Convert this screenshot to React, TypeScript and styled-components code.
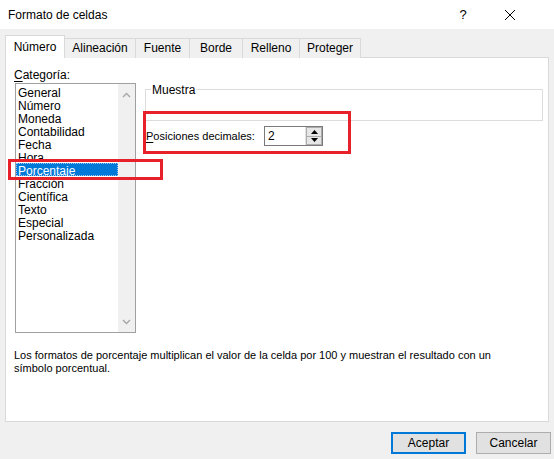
import React from "react";
import styled, { createGlobalStyle } from "styled-components";

const GlobalStyle = createGlobalStyle`
  html, body {
    margin: 0;
    padding: 0;
    background: #f0f0f0;
  }
  body {
    font-family: "Liberation Sans", Arial, sans-serif;
    font-size: 11px;
    color: #000;
  }
`;

const Dialog = styled.div`
  width: 554px;
  height: 459px;
  background: #f0f0f0;
  display: flex;
  flex-direction: column;
  overflow: hidden;
`;

const TitleBar = styled.div`
  height: 29px;
  background: #fff;
  display: flex;
  align-items: center;
  padding-left: 8px;
  box-sizing: border-box;
`;

const Title = styled.div`
  flex: 1;
  font-size: 12px;
  line-height: 16px;
`;

const HelpButton = styled.div`
  width: 14px;
  margin-right: 34px;
  text-align: center;
  font-size: 13px;
  line-height: 16px;
`;

const CloseButton = styled.div`
  width: 12px;
  height: 12px;
  margin-right: 38px;
  display: flex;
`;

const Tabs = styled.div`
  display: flex;
  align-items: flex-end;
  height: 23px;
  margin: 6px 0 0 5px;
  position: relative;
  z-index: 1;
`;

const Tab = styled.div<{ $active?: boolean; $w: number }>`
  box-sizing: border-box;
  width: ${(p) => p.$w}px;
  height: ${(p) => (p.$active ? 23 : 20)}px;
  background: ${(p) => (p.$active ? "#fff" : "#f0f0f0")};
  border: 1px solid #d9d9d9;
  border-bottom: none;
  margin-left: -1px;
  &:first-child {
    margin-left: 0;
  }
  display: flex;
  justify-content: center;
  padding-top: ${(p) => (p.$active ? 4 : 2)}px;
  font-size: 12px;
  line-height: 15px;
  white-space: nowrap;
  position: relative;
  z-index: ${(p) => (p.$active ? 2 : 1)};
`;

const Panel = styled.div`
  position: relative;
  margin: -1px 5px 0 5px;
  height: 365px;
  box-sizing: border-box;
  background: #fff;
  border: 1px solid #d9d9d9;
  padding: 9px 6px 0 8px;
`;

const TopArea = styled.div`
  display: flex;
`;

const CategoryColumn = styled.div`
  width: 122px;
  display: flex;
  flex-direction: column;
`;

const Label = styled.div`
  font-size: 12px;
  line-height: 16px;
  height: 15px;
  white-space: nowrap;
`;

const Mnemonic = styled.span`
  text-decoration: underline;
  text-underline-offset: 2px;
`;

const ListBox = styled.div`
  margin: 1px 0 0 1px;
  width: 121px;
  height: 250px;
  box-sizing: border-box;
  border: 1px solid #a0a0a0;
  display: flex;
`;

const Items = styled.div`
  flex: 1;
  padding-top: 1px;
`;

const Item = styled.div<{ $selected?: boolean }>`
  height: 13px;
  line-height: 13px;
  padding: 1px 0 0 1px;
  box-sizing: border-box;
  font-size: 12px;
  background: ${(p) => (p.$selected ? "#0078d7" : "transparent")};
  color: ${(p) => (p.$selected ? "#fff" : "#000")};
  border: 1px ${(p) => (p.$selected ? "dotted #9ec5f0" : "solid transparent")};
  white-space: nowrap;
`;

const ScrollBar = styled.div`
  width: 17px;
  background: #f0f0f0;
  display: flex;
  flex-direction: column;
  justify-content: space-between;
  align-items: center;
  padding: 8px 0 7px;
  box-sizing: border-box;
`;

const RightColumn = styled.div`
  margin-left: 9px;
  flex: 1;
  display: flex;
  flex-direction: column;
`;

const GroupBox = styled.div`
  position: relative;
  margin-top: 22px;
  width: 398px;
  height: 32px;
  box-sizing: border-box;
  border: 1px solid #dcdcdc;
`;

const Legend = styled.span`
  position: absolute;
  top: -7px;
  left: 5px;
  padding: 0 1px;
  background: #fff;
  font-size: 12px;
  line-height: 14px;
`;

const DecimalRow = styled.div`
  margin-top: 5px;
  display: flex;
  align-items: center;
`;

const DecimalLabel = styled.div`
  width: 118px;
  margin-left: 1px;
  padding-top: 1px;
  line-height: 15px;
  white-space: nowrap;
`;

const SpinBox = styled.div`
  width: 59px;
  height: 20px;
  box-sizing: border-box;
  border: 1px solid #7a7a7a;
  display: flex;
`;

const SpinValue = styled.div`
  flex: 1;
  padding-left: 3px;
  font-size: 12px;
  line-height: 18px;
`;

const SpinButtons = styled.div`
  width: 16px;
  display: flex;
  flex-direction: column;
  border-left: 1px solid #e3e3e3;
`;

const SpinButton = styled.div`
  flex: 1;
  background: #e6e6e6;
  border: 1px solid #adadad;
  display: flex;
  align-items: center;
  justify-content: center;
  &:first-child {
    border-bottom: none;
  }
`;

const Description = styled.div`
  margin-top: 16px;
  line-height: 13px;
  width: 500px;
`;

const Highlight = styled.div<{ $x: number; $y: number; $w: number; $h: number }>`
  position: absolute;
  left: ${(p) => p.$x}px;
  top: ${(p) => p.$y}px;
  width: ${(p) => p.$w}px;
  height: ${(p) => p.$h}px;
  box-sizing: border-box;
  border: 3px solid #e8202a;
  pointer-events: none;
`;

const Footer = styled.div`
  display: flex;
  justify-content: flex-end;
  gap: 10px;
  margin-top: 10px;
  padding-right: 3px;
`;

const Button = styled.div<{ $default?: boolean }>`
  width: 75px;
  height: 22px;
  box-sizing: border-box;
  background: #e1e1e1;
  border: ${(p) => (p.$default ? "2px solid #0078d7" : "1px solid #adadad")};
  display: flex;
  align-items: center;
  justify-content: center;
  font-size: 12px;
  line-height: 15px;
`;

const tabs = [
  { name: "Número", w: 60 },
  { name: "Alineación", w: 72 },
  { name: "Fuente", w: 55 },
  { name: "Borde", w: 54 },
  { name: "Relleno", w: 58 },
  { name: "Proteger", w: 62 },
];

const categories = [
  "General",
  "Número",
  "Moneda",
  "Contabilidad",
  "Fecha",
  "Hora",
  "Porcentaje",
  "Fracción",
  "Científica",
  "Texto",
  "Especial",
  "Personalizada",
];

const Chevron = ({ up }: { up?: boolean }) => (
  <svg width="9" height="6" viewBox="0 0 9 6">
    <path
      d={up ? "M1 5 L4.5 1.5 L8 5" : "M1 1 L4.5 4.5 L8 1"}
      fill="none"
      stroke="#a6a6a6"
      strokeWidth="1.4"
    />
  </svg>
);

const Arrow = ({ up }: { up?: boolean }) => (
  <svg width="7" height="4" viewBox="0 0 7 4">
    <path d={up ? "M0 4 L3.5 0 L7 4 Z" : "M0 0 L3.5 4 L7 0 Z"} fill="#000" />
  </svg>
);

const App = () => {
  return (
    <>
      <GlobalStyle />
      <Dialog>
        <TitleBar>
          <Title>Formato de celdas</Title>
          <HelpButton>?</HelpButton>
          <CloseButton>
            <svg width="12" height="12" viewBox="0 0 12 12">
              <path d="M1 1 L11 11 M11 1 L1 11" stroke="#000" strokeWidth="1" />
            </svg>
          </CloseButton>
        </TitleBar>

        <Tabs>
          {tabs.map((t, i) => (
            <Tab key={t.name} $w={t.w} $active={i === 0}>
              {t.name}
            </Tab>
          ))}
        </Tabs>

        <Panel>
          <TopArea>
            <CategoryColumn>
              <Label>
                <Mnemonic>C</Mnemonic>ategoría:
              </Label>
              <ListBox>
                <Items>
                  {categories.map((c) => (
                    <Item key={c} $selected={c === "Porcentaje"}>
                      {c}
                    </Item>
                  ))}
                </Items>
                <ScrollBar>
                  <Chevron up />
                  <Chevron />
                </ScrollBar>
              </ListBox>
            </CategoryColumn>

            <RightColumn>
              <GroupBox>
                <Legend>Muestra</Legend>
              </GroupBox>
              <DecimalRow>
                <DecimalLabel>
                  <Mnemonic>P</Mnemonic>osiciones decimales:
                </DecimalLabel>
                <SpinBox>
                  <SpinValue>2</SpinValue>
                  <SpinButtons>
                    <SpinButton>
                      <Arrow up />
                    </SpinButton>
                    <SpinButton>
                      <Arrow />
                    </SpinButton>
                  </SpinButtons>
                </SpinBox>
              </DecimalRow>
            </RightColumn>
          </TopArea>

          <Description>
            Los formatos de porcentaje multiplican el valor de la celda por 100 y
            muestran el resultado con un símbolo porcentual.
          </Description>

          <Highlight $x={2} $y={101} $w={155} $h={21} />
          <Highlight $x={137} $y={53} $w={208} $h={43} />
        </Panel>

        <Footer>
          <Button $default>Aceptar</Button>
          <Button>Cancelar</Button>
        </Footer>
      </Dialog>
    </>
  );
};

export default App;
